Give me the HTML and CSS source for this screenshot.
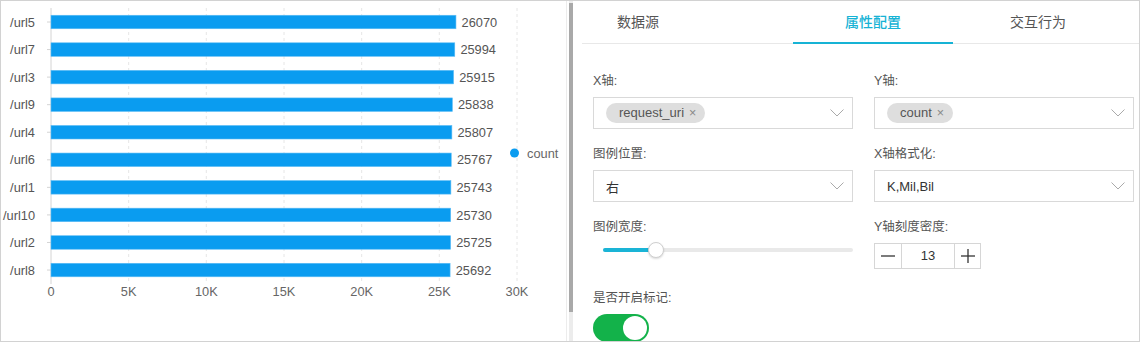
FILE: index.html
```html
<!DOCTYPE html>
<html lang="zh">
<head>
<meta charset="utf-8">
<title>柱状图配置</title>
<link rel="stylesheet" href="styles.css">
</head>
<body>
<div class="frame">
  <div class="chart-panel">
    <svg class="chart" width="565" height="340" viewBox="1 1 565 340">
      <g class="grid">
        <line x1="128.7" y1="8" x2="128.7" y2="284"/>
        <line x1="206.3" y1="8" x2="206.3" y2="284"/>
        <line x1="284" y1="8" x2="284" y2="284"/>
        <line x1="361.7" y1="8" x2="361.7" y2="284"/>
        <line x1="439.3" y1="8" x2="439.3" y2="284"/>
        <line x1="517" y1="8" x2="517" y2="284"/>
      </g>
      <line class="axis" x1="51" y1="8" x2="51" y2="284"/>
      <g class="ticks">
        <line x1="47" y1="22" x2="51" y2="22"/>
        <line x1="47" y1="49.56" x2="51" y2="49.56"/>
        <line x1="47" y1="77.12" x2="51" y2="77.12"/>
        <line x1="47" y1="104.68" x2="51" y2="104.68"/>
        <line x1="47" y1="132.24" x2="51" y2="132.24"/>
        <line x1="47" y1="159.8" x2="51" y2="159.8"/>
        <line x1="47" y1="187.36" x2="51" y2="187.36"/>
        <line x1="47" y1="214.92" x2="51" y2="214.92"/>
        <line x1="47" y1="242.48" x2="51" y2="242.48"/>
        <line x1="47" y1="270.04" x2="51" y2="270.04"/>
      </g>
      <g class="bars">
        <rect x="51" y="15.25" width="404.95" height="13.5"/>
        <rect x="51" y="42.81" width="403.77" height="13.5"/>
        <rect x="51" y="70.37" width="402.55" height="13.5"/>
        <rect x="51" y="97.93" width="401.35" height="13.5"/>
        <rect x="51" y="125.49" width="400.87" height="13.5"/>
        <rect x="51" y="153.05" width="400.25" height="13.5"/>
        <rect x="51" y="180.61" width="399.88" height="13.5"/>
        <rect x="51" y="208.17" width="399.67" height="13.5"/>
        <rect x="51" y="235.73" width="399.6" height="13.5"/>
        <rect x="51" y="263.29" width="399.08" height="13.5"/>
      </g>
      <g class="ylabels">
        <text x="35" y="22" dy="0.36em">/url5</text>
        <text x="35" y="49.56" dy="0.36em">/url7</text>
        <text x="35" y="77.12" dy="0.36em">/url3</text>
        <text x="35" y="104.68" dy="0.36em">/url9</text>
        <text x="35" y="132.24" dy="0.36em">/url4</text>
        <text x="35" y="159.8" dy="0.36em">/url6</text>
        <text x="35" y="187.36" dy="0.36em">/url1</text>
        <text x="35" y="214.92" dy="0.36em">/url10</text>
        <text x="35" y="242.48" dy="0.36em">/url2</text>
        <text x="35" y="270.04" dy="0.36em">/url8</text>
      </g>
      <g class="values">
        <text x="461.6" y="22" dy="0.36em">26070</text>
        <text x="460.4" y="49.56" dy="0.36em">25994</text>
        <text x="459.2" y="77.12" dy="0.36em">25915</text>
        <text x="458" y="104.68" dy="0.36em">25838</text>
        <text x="457.5" y="132.24" dy="0.36em">25807</text>
        <text x="456.9" y="159.8" dy="0.36em">25767</text>
        <text x="456.5" y="187.36" dy="0.36em">25743</text>
        <text x="456.3" y="214.92" dy="0.36em">25730</text>
        <text x="456.2" y="242.48" dy="0.36em">25725</text>
        <text x="455.7" y="270.04" dy="0.36em">25692</text>
      </g>
      <g class="xlabels">
        <text x="51" y="291" dy="0.36em">0</text>
        <text x="128.7" y="291" dy="0.36em">5K</text>
        <text x="206.3" y="291" dy="0.36em">10K</text>
        <text x="284" y="291" dy="0.36em">15K</text>
        <text x="361.7" y="291" dy="0.36em">20K</text>
        <text x="439.3" y="291" dy="0.36em">25K</text>
        <text x="517" y="291" dy="0.36em">30K</text>
      </g>
      <circle class="legend-dot" cx="514.5" cy="153" r="4.5"/>
      <text class="legend-text" x="527" y="153" dy="0.36em">count</text>
    </svg>
  </div>
  <div class="scroll">
    <div class="scroll-track"><div class="scroll-thumb"></div></div>
  </div>
  <div class="config-panel">
    <div class="tabs">
      <div class="tab tab-source">数据源</div>
      <div class="tab tab-attr active">属性配置</div>
      <div class="tab tab-action">交互行为</div>
    </div>
    <div class="form">
      <div class="field">
        <div class="field-label">X轴:</div>
        <div class="select">
          <span class="tag">request_uri<span class="tag-x">×</span></span>
          <svg class="chevron" width="14" height="8" viewBox="0 0 14 8"><polyline points="0.5,0.5 7,7 13.5,0.5"/></svg>
        </div>
      </div>
      <div class="field">
        <div class="field-label">Y轴:</div>
        <div class="select">
          <span class="tag">count<span class="tag-x">×</span></span>
          <svg class="chevron" width="14" height="8" viewBox="0 0 14 8"><polyline points="0.5,0.5 7,7 13.5,0.5"/></svg>
        </div>
      </div>
      <div class="field">
        <div class="field-label">图例位置:</div>
        <div class="select">
          <span class="select-value">右</span>
          <svg class="chevron" width="14" height="8" viewBox="0 0 14 8"><polyline points="0.5,0.5 7,7 13.5,0.5"/></svg>
        </div>
      </div>
      <div class="field">
        <div class="field-label">X轴格式化:</div>
        <div class="select">
          <span class="select-value">K,Mil,Bil</span>
          <svg class="chevron" width="14" height="8" viewBox="0 0 14 8"><polyline points="0.5,0.5 7,7 13.5,0.5"/></svg>
        </div>
      </div>
      <div class="field">
        <div class="field-label">图例宽度:</div>
        <div class="slider">
          <div class="slider-track">
            <div class="slider-fill"></div>
            <div class="slider-handle"></div>
          </div>
        </div>
      </div>
      <div class="field">
        <div class="field-label">Y轴刻度密度:</div>
        <div class="stepper">
          <div class="step-btn">
            <svg width="14" height="14" viewBox="0 0 14 14"><line x1="0" y1="7" x2="14" y2="7"/></svg>
          </div>
          <div class="step-value">13</div>
          <div class="step-btn">
            <svg width="14" height="14" viewBox="0 0 14 14"><line x1="0" y1="7" x2="14" y2="7"/><line x1="7" y1="0" x2="7" y2="14"/></svg>
          </div>
        </div>
      </div>
      <div class="field field-last">
        <div class="field-label">是否开启标记:</div>
        <div class="switch"><div class="switch-knob"></div></div>
      </div>
    </div>
  </div>
</div>
</body>
</html>
```

FILE: styles.css
```css
* { box-sizing: border-box; }

html, body {
  margin: 0;
  padding: 0;
  background: #fff;
}

body {
  font-family: "Liberation Sans", "Noto Sans CJK SC", sans-serif;
  color: #555;
}

.frame {
  width: 1140px;
  height: 342px;
  border: 1px solid #d2d2d2;
  display: flex;
  overflow: hidden;
}

/* ---------- chart ---------- */
.chart-panel {
  width: 566px;
  height: 340px;
  border-right: 1px solid #ececec;
  flex: none;
}

.chart {
  display: block;
  font-family: "Liberation Sans", sans-serif;
  font-size: 12.8px;
}

.grid line {
  stroke: #e6e6e6;
  stroke-width: 1;
  stroke-dasharray: 3 3;
}

.axis {
  stroke: #d4d4d4;
  stroke-width: 1;
}

.ticks line {
  stroke: #d4d4d4;
  stroke-width: 1;
}

.bars rect {
  fill: #0a9cf0;
  stroke: #5cbcf5;
  stroke-width: 0.6;
}

.ylabels text {
  fill: #555;
  text-anchor: end;
}

.values text {
  fill: #555;
}

.xlabels text {
  fill: #666;
  text-anchor: middle;
}

.legend-dot { fill: #0a9cf0; }

.legend-text { fill: #666; }

/* ---------- scrollbar ---------- */
.scroll {
  width: 6px;
  flex: none;
  padding-left: 2px;
}

.scroll-track {
  width: 4px;
  height: 100%;
  background: #ececec;
  padding-top: 2px;
}

.scroll-thumb {
  width: 4px;
  height: 309px;
  background: #a9a9a9;
}

/* ---------- config panel ---------- */
.config-panel {
  flex: 1;
  min-width: 0;
}

.tabs {
  display: flex;
  margin-left: 9px;
  height: 43px;
  border-bottom: 1px solid #e8e8e8;
}

.tab {
  height: 42px;
  line-height: 40px;
  text-align: center;
  font-size: 14px;
  color: #555;
  font-family: "Noto Sans CJK SC", sans-serif;
}

.tab-source { width: 112px; }

.tab-attr {
  width: 160px;
  margin-left: 99px;
}

.tab-action { width: 170px; }

.tab.active {
  height: 43px;
  color: #17b3d5;
  border-bottom: 2px solid #17b3d5;
  font-weight: 500;
}

.form {
  padding: 28px 0 0 20px;
  display: grid;
  grid-template-columns: 260px 260px;
  column-gap: 21px;
  row-gap: 16px;
}

.field-label {
  height: 18px;
  line-height: 18px;
  margin-bottom: 7px;
  font-size: 12.5px;
  color: #555;
}

.field-last { margin-top: 2px; }

.select {
  height: 32px;
  border: 1px solid #d9d9d9;
  display: flex;
  align-items: center;
  padding: 0 6px 0 12px;
}

.select-value {
  font-size: 13px;
  color: #333;
  flex: 1;
}

.tag {
  height: 20px;
  line-height: 20px;
  border-radius: 10px;
  background: #dedede;
  padding: 0 9px 0 13px;
  font-size: 13px;
  color: #555;
  display: inline-flex;
  align-items: center;
}

.tag-x {
  font-size: 12.5px;
  color: #888;
  margin-left: 5px;
}

.chevron {
  margin-left: auto;
  margin-right: 2px;
  display: block;
}

.chevron polyline {
  fill: none;
  stroke: #aaa;
  stroke-width: 1;
}

/* slider */
.slider {
  height: 28px;
  padding: 5px 0 0 10px;
}

.slider-track {
  position: relative;
  height: 4px;
  background: #e9e9e9;
  border-radius: 2px;
}

.slider-fill {
  width: 53px;
  height: 4px;
  background: #1ab4d6;
  border-radius: 2px;
}

.slider-handle {
  position: absolute;
  left: 45px;
  top: -6px;
  width: 16px;
  height: 16px;
  border-radius: 50%;
  background: #fff;
  border: 1px solid #cfcfcf;
  box-shadow: 0 1px 2px rgba(0, 0, 0, 0.15);
}

/* stepper */
.stepper {
  margin-top: 2px;
  width: 107px;
  height: 26px;
  display: flex;
  border: 1px solid #d6d6d6;
}

.step-btn {
  width: 26px;
  display: flex;
  align-items: center;
  justify-content: center;
  flex: none;
}

.step-btn svg line {
  stroke: #333;
  stroke-width: 1.3;
}

.step-value {
  width: 54px;
  flex: none;
  border-left: 1px solid #d6d6d6;
  border-right: 1px solid #d6d6d6;
  text-align: center;
  line-height: 24px;
  font-size: 13px;
  color: #333;
}

/* switch */
.switch {
  width: 56px;
  height: 28px;
  border-radius: 14px;
  background: #13b24a;
  padding: 2px;
  display: flex;
  justify-content: flex-end;
}

.switch-knob {
  width: 24px;
  height: 24px;
  border-radius: 50%;
  background: #fff;
}
```
